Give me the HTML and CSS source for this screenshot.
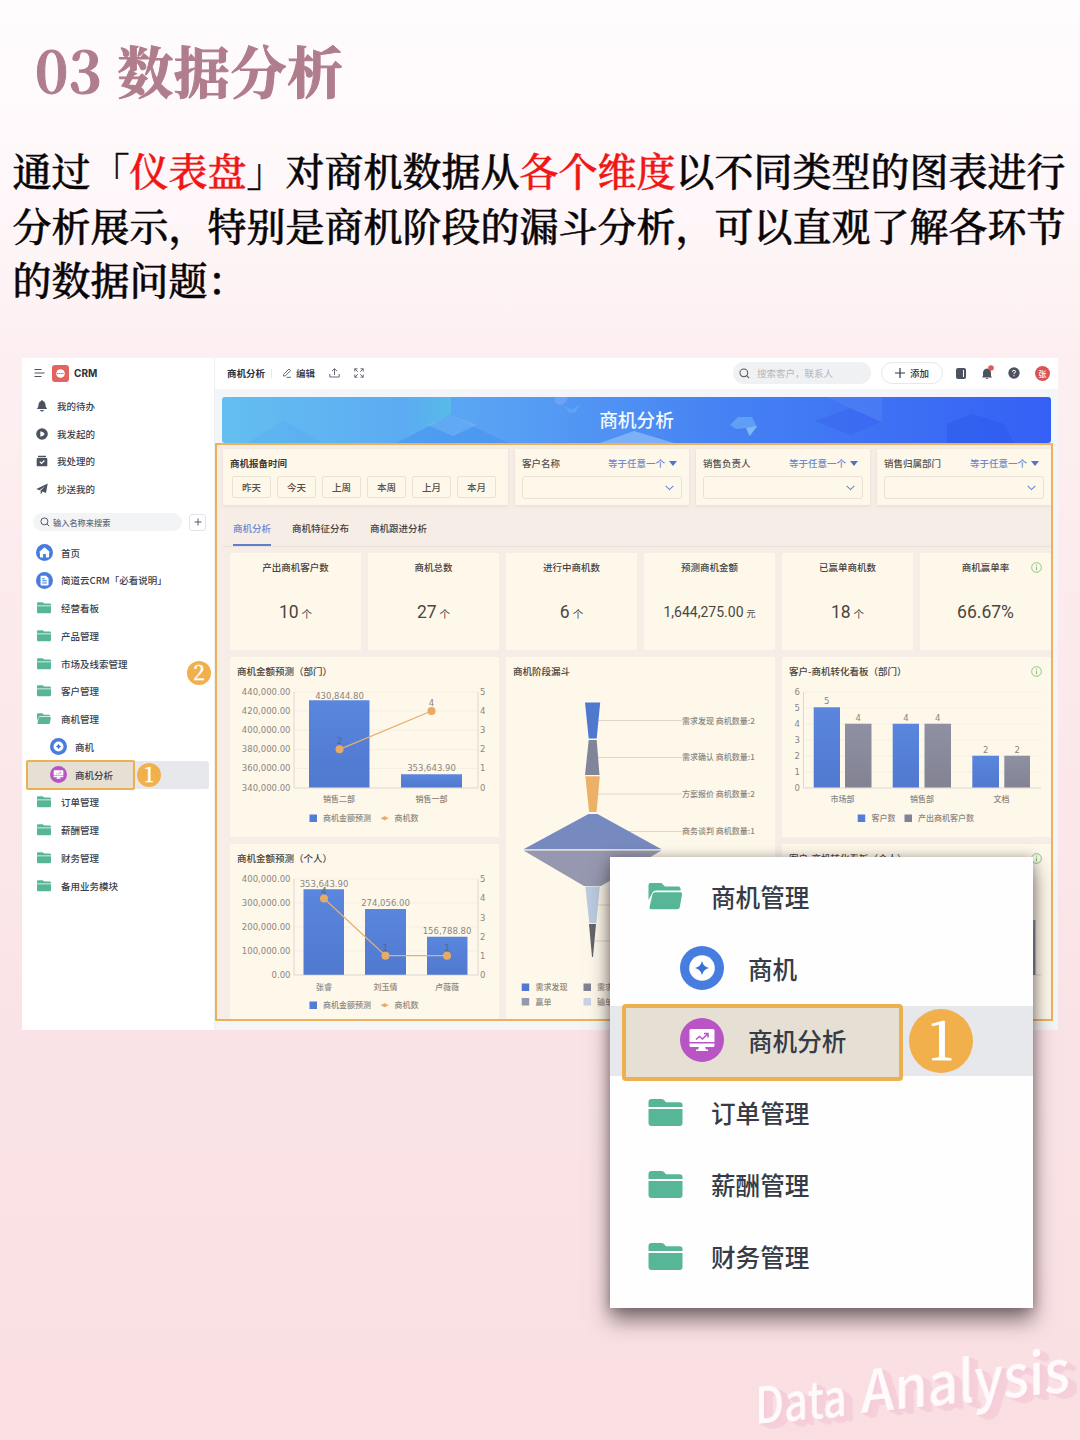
FILE: index.html
```html
<!DOCTYPE html>
<html lang="zh-CN">
<head>
<meta charset="utf-8">
<title>03 数据分析</title>
<link rel="stylesheet" href="styles.css">
</head>
<body>
<svg class="defs" width="0" height="0" aria-hidden="true">
  <defs>
    <symbol id="folder" viewBox="0 0 34 28"><path fill="#58b698" d="M0 8V3q0-3 3-3h10q1.500 0 2.500 1l2 2.200H31q3 0 3 3V8zM0 10h34v14q0 3-3 3H3q-3 0-3-3z"/></symbol>
    <symbol id="folder-open" viewBox="0 0 34 28"><path fill="#58b698" d="M0 17V2q0-2 2-2h11l3.500 3.500H30q2 0 2.300 4H8q-3.500 0-4.500 3zM6.500 9.300H32q2 0 1.600 2l-2.300 13q-.5 2-2.300 2H2.500q-2 0-1.500-2l3-13q.5-2 2.500-2z"/></symbol>
    <symbol id="compass" viewBox="0 0 44 44"><circle cx="22" cy="22" r="22" fill="#487de0"/><circle cx="22" cy="22" r="12.800" fill="#fff"/><path fill="#3c70d2" d="M22 15q1.300 5.700 7 7-5.700 1.300-7 7-1.300-5.700-7-7 5.700-1.300 7-7z"/></symbol>
    <symbol id="board" viewBox="0 0 44 44"><circle cx="22" cy="22" r="22" fill="#b954c4"/><path fill="#fff" d="M11 11h22q1.500 0 1.500 1.500V24h-25V12.500Q9.500 11 11 11zM9.500 25.500h25v2q0 1.500-1.500 1.500h-8l1 2.500h2V33H16v-1.500h2L19 29h-8q-1.500 0-1.500-1.500z"/><path d="M16 21.500l3.500-3 3 2.500 4.500-4.500M24 15.500h4v4" fill="none" stroke="#b954c4" stroke-width="1.500"/></symbol>
    <symbol id="home" viewBox="0 0 16 16"><circle cx="8" cy="8" r="8" fill="#487de0"/><path fill="#fff" d="M8 3l5 4.600-.7.700V12q0 .6-.6.600H9.300V9.500H6.700v3.100H4.300q-.6 0-.6-.6V8.300L3 7.600z"/></symbol>
    <symbol id="doc" viewBox="0 0 16 16"><circle cx="8" cy="8" r="8" fill="#487de0"/><path fill="#fff" d="M5 3.500h4.500l2.300 2.300v6.100q0 .7-.7.700H5q-.7 0-.7-.7V4.200q0-.7.700-.7z"/><path stroke="#487de0" d="M5.800 6.300h2.500M5.800 8.300h4.400M5.800 10.300h4.400"/></symbol>
    <symbol id="bell" viewBox="0 0 12 12"><path fill="#4d535e" d="M6 0q.8 0 .8.900Q9.500 1.800 9.500 5q0 2.500 1.700 4H.8Q2.500 7.500 2.500 5q0-3.200 2.700-4.100Q5.200 0 6 0zM4 10h4q-.5 1.600-2 1.600T4 10z"/></symbol>
    <symbol id="play" viewBox="0 0 12 12"><circle cx="6" cy="6" r="5.800" fill="#4d535e"/><path fill="#fff" d="M4.300 3.300Q7.800 4 8.700 6 7.800 8 4.300 8.700z"/></symbol>
    <symbol id="task" viewBox="0 0 12 12"><path fill="#4d535e" d="M2 .7h8v1.500H2zM1.500 3h9q.8 0 .8.800v6.700q0 .8-.8.800h-9q-.8 0-.8-.8V3.800q0-.8.800-.8z"/><path d="M3.800 6.700l1.700 1.700 2.900-2.900" fill="none" stroke="#fff" stroke-width="1.200"/></symbol>
    <symbol id="plane" viewBox="0 0 12 12"><path fill="#4d535e" d="M11.700.5L10 10 6.500 8.600 4.800 11.500 4.500 7.800 9 3.300 3.500 7.300.3 6z"/></symbol>
    <symbol id="glass" viewBox="0 0 10 10"><circle cx="4.400" cy="4.400" r="3.500" fill="none" stroke="#555b66"/><path d="M7 7l2.200 2.200" stroke="#555b66"/></symbol>
    <symbol id="chevron" viewBox="0 0 8 5"><path d="M.6.600L4 3.900 7.400.6" fill="none" stroke="#6985cf"/></symbol>
    <symbol id="info" viewBox="0 0 10 10"><circle cx="5" cy="5" r="4.400" fill="none" stroke="#7cbf73" stroke-width=".8"/><path d="M5 2.400v1M5 4.300v3.200" stroke="#7cbf73" stroke-width=".9"/></symbol>
    <linearGradient id="blue" x2="0" y2="1"><stop stop-color="#5a86dd"/><stop offset="1" stop-color="#5079cf"/></linearGradient>
    <linearGradient id="grey" x2="0" y2="1"><stop stop-color="#8f91a3"/><stop offset="1" stop-color="#828293"/></linearGradient>
  </defs>
</svg>

<main class="page">
  <h1 class="title">03 数据分析</h1>
  <p class="intro">通过「<em>仪表盘</em>」对商机数据从<em>各个维度</em>以不同类型的图表进行<br>分析展示，特别是商机阶段的漏斗分析，可以直观了解各环节<br>的数据问题：</p>

  <section class="app">
    <aside class="sidebar">
      <header class="brand">
        <svg width="11" height="10" viewBox="0 0 11 10"><path d="M.5 1.500h7M.5 5h10M.5 8.500h7" stroke="#4d535e" stroke-width="1.100"/></svg>
        <svg width="17" height="17" viewBox="0 0 17 17"><rect width="17" height="17" rx="3" fill="#e2645f"/><circle cx="8.500" cy="8.500" r="4.300" fill="#fff"/><path d="M5 8.500h7" stroke="#e2645f" stroke-width="1.200" stroke-dasharray="1.500 .6"/></svg>
        <b>CRM</b>
      </header>
      <ul class="mine">
        <li><svg><use href="#bell"/></svg>我的待办</li>
        <li><svg><use href="#play"/></svg>我发起的</li>
        <li><svg><use href="#task"/></svg>我处理的</li>
        <li><svg><use href="#plane"/></svg>抄送我的</li>
      </ul>
      <div class="finder">
        <label class="find"><svg width="10" height="10"><use href="#glass"/></svg>输入名称来搜索</label>
        <span class="plus"><svg width="8" height="8" viewBox="0 0 8 8"><path d="M4 .5v7M.5 4h7" stroke="#555b66"/></svg></span>
      </div>
      <ul class="nav">
        <li><svg class="round"><use href="#home"/></svg>首页</li>
        <li><svg class="round"><use href="#doc"/></svg>简道云CRM「必看说明」</li>
        <li><svg><use href="#folder"/></svg>经营看板</li>
        <li><svg><use href="#folder"/></svg>产品管理</li>
        <li><svg><use href="#folder"/></svg>市场及线索管理</li>
        <li><svg><use href="#folder"/></svg>客户管理</li>
        <li><svg><use href="#folder-open"/></svg>商机管理</li>
        <li class="sub"><svg class="round"><use href="#compass"/></svg>商机</li>
        <li class="sub active"><i class="frame"></i><svg class="round"><use href="#board"/></svg>商机分析<span class="badge one">1</span></li>
        <li><svg><use href="#folder"/></svg>订单管理</li>
        <li><svg><use href="#folder"/></svg>薪酬管理</li>
        <li><svg><use href="#folder"/></svg>财务管理</li>
        <li><svg><use href="#folder"/></svg>备用业务模块</li>
      </ul>
    </aside>

    <div class="main">
      <header class="topbar">
        <b>商机分析</b><i class="sep"></i>
        <span class="edit"><svg width="10" height="10" viewBox="0 0 10 10"><path d="M1.500 6.500l5.500-5.500 1.600 1.600L3.200 8H1.500zM4.500 9.300H9" fill="none" stroke="#555b66" stroke-width=".9"/></svg>编辑</span>
        <svg class="share" width="11" height="10" viewBox="0 0 11 10"><path d="M5.500 7V1M3 3l2.500-2.300L8 3M.8 6v3h9.400V6" fill="none" stroke="#555b66" stroke-width=".9"/></svg>
        <svg class="expand" width="10" height="10" viewBox="0 0 10 10"><path d="M.8 3.500V.8h2.700M.8.800L3.800 3.800M6.500.8h2.700v2.700M9.200.8L6.200 3.800M.8 6.500v2.700h2.700M.8 9.200l3-3M6.500 9.200h2.700V6.500M9.200 9.200l-3-3" fill="none" stroke="#555b66" stroke-width=".9"/></svg>
        <label class="search"><svg width="11" height="11"><use href="#glass"/></svg>搜索客户，联系人</label>
        <span class="add"><svg width="10" height="10" viewBox="0 0 10 10"><path d="M5 0v10M0 5h10" stroke="#333a45" stroke-width="1.200"/></svg>添加</span>
        <div class="tools">
          <svg width="10" height="11" viewBox="0 0 10 11"><rect width="10" height="11" rx="2" fill="#4d535e"/><path d="M7.500 2v7" stroke="#fff"/></svg>
          <svg width="12" height="16" viewBox="0 0 12 16"><path fill="#4d535e" d="M5 3.500Q9 4 9 8v3l1 1.500H0L1 11V8q0-4 4-4.500zM3.500 13h3L5 14.300z"/><circle cx="9" cy="3" r="2.800" fill="#df5a55"/></svg>
          <svg width="12" height="12" viewBox="0 0 12 12"><circle cx="6" cy="6" r="5.700" fill="#4d535e"/><path d="M4.400 4.800q0-1.500 1.600-1.500t1.600 1.400Q7.600 5.800 6 6.200v1M6 8.200v1.100" fill="none" stroke="#fff"/></svg>
          <span class="avatar">张</span>
        </div>
      </header>

      <div class="banner">
        <svg width="829" height="46" viewBox="0 0 829 46" preserveAspectRatio="none">
          <path d="M25 46L62 23l38 23z" fill="#4da2ef" opacity=".2"/>
          <path d="M182 0h47v17l-48 26z" fill="url(#teal)"/>
          <path d="M180 43l49-25 40 20 18 8H175z" fill="#3f8df0" opacity=".45"/>
          <path d="M205 28l24-10 26 10-24 11z" fill="#83bdf7" opacity=".4"/>
          <path d="M333 0h13q-2 8-8 8t-5-8z" fill="#91aef5" opacity=".45"/>
          <path d="M342 9l8 4 8-6-4 8-6 1z" fill="#6fc0f5" opacity=".35"/>
          <path d="M378 46l34-12 40 12z" fill="#9fc7f8" opacity=".6"/>
          <path d="M508 28l8-8h14l5 10-8 9-3-8-10 1z" fill="#75b9f5" opacity=".55"/>
          <path d="M524 31l11-2-7 10z" fill="#a5d2f8" opacity=".5"/>
          <path d="M593 24l36-13 30 14-30 13z" fill="#365eea" opacity=".4"/>
          <path d="M605 0h55v25l-30-13z" fill="#6190f5" opacity=".3"/>
          <path d="M725 46V27l25-10 32 10 10 19z" fill="#2956e8" opacity=".4"/>
          <defs><linearGradient id="teal"><stop stop-color="#55d0dc" stop-opacity="0"/><stop offset="1" stop-color="#55d0dc" stop-opacity=".5"/></linearGradient></defs>
        </svg>
        <strong>商机分析</strong>
      </div>

      <div class="board">
        <div class="filters">
          <div class="panel filter dates">
            <b>商机报备时间</b>
            <div class="chips"><span>昨天</span><span>今天</span><span>上周</span><span>本周</span><span>上月</span><span>本月</span></div>
          </div>
          <div class="panel filter"><div class="line"><span>客户名称</span><span class="op">等于任意一个<i></i></span></div><div class="select"><svg width="9" height="6"><use href="#chevron"/></svg></div></div>
          <div class="panel filter"><div class="line"><span>销售负责人</span><span class="op">等于任意一个<i></i></span></div><div class="select"><svg width="9" height="6"><use href="#chevron"/></svg></div></div>
          <div class="panel filter"><div class="line"><span>销售归属部门</span><span class="op">等于任意一个<i></i></span></div><div class="select"><svg width="9" height="6"><use href="#chevron"/></svg></div></div>
        </div>
        <nav class="tabs"><span class="on">商机分析</span><span>商机特征分布</span><span>商机跟进分析</span></nav>

        <div class="kpis">
          <div class="panel kpi"><h4>产出商机客户数</h4><p>10<small>个</small></p></div>
          <div class="panel kpi"><h4>商机总数</h4><p>27<small>个</small></p></div>
          <div class="panel kpi"><h4>进行中商机数</h4><p>6<small>个</small></p></div>
          <div class="panel kpi long"><h4>预测商机金额</h4><p>1,644,275.00<small>元</small></p></div>
          <div class="panel kpi"><h4>已赢单商机数</h4><p>18<small>个</small></p></div>
          <div class="panel kpi"><h4>商机赢单率</h4><p>66.67%</p><svg class="info"><use href="#info"/></svg></div>
        </div>

        <div class="charts">
          <div class="panel chart">
            <h3>商机金额预测（部门）</h3>
            <svg viewBox="230 685 269 152" width="269" height="152">
              <path class="gridline" d="M294 692h184M294 711h184M294 730h184M294 749.500h184M294 768.500h184"/>
              <path class="axis" d="M294 692v96h184v-96"/>
              <g class="num end"><text x="290.500" y="695">440,000.00</text><text x="290.500" y="714">420,000.00</text><text x="290.500" y="733.200">400,000.00</text><text x="290.500" y="752.300">380,000.00</text><text x="290.500" y="771.400">360,000.00</text><text x="290.500" y="790.500">340,000.00</text></g>
              <g class="num"><text x="480" y="695">5</text><text x="480" y="714">4</text><text x="480" y="733.200">3</text><text x="480" y="752.300">2</text><text x="480" y="771.400">1</text><text x="480" y="790.500">0</text></g>
              <path fill="url(#blue)" d="M309 700.300h60.500V787.500H309z"/><path fill="url(#blue)" d="M401 774.300h61V787.500h-61z"/>
              <g class="num mid"><text x="339.500" y="699">430,844.80</text><text x="431.500" y="771.300">353,643.90</text><text x="431.500" y="705.500">4</text></g>
              <text class="num mid dark" x="339.500" y="744">2</text>
              <path class="trend" d="M339.500 749.300L431.500 711"/><circle cx="339.500" cy="749.300" r="4" class="dot"/><circle cx="431.500" cy="711" r="4" class="dot"/>
              <g class="lab mid"><text x="339" y="802">销售二部</text><text x="431.500" y="802">销售一部</text></g>
              <path fill="#527dd6" d="M309.500 814.500h7.500v7.500h-7.500z"/><path class="trend" d="M381 818.200h7.500"/><circle cx="384.700" cy="818.200" r="2" class="dot"/>
              <g class="lab"><text x="323" y="821.300">商机金额预测</text><text x="394.500" y="821.300">商机数</text></g>
            </svg>
          </div>

          <div class="panel chart funnel">
            <h3>商机阶段漏斗</h3>
            <svg viewBox="506 685 269 336" width="269" height="336">
              <path class="lead" d="M597 720.500h85M598 757.500h84M598 794h84M628 831.500h54M598 905h90M595 941h90"/>
              <path fill="#4f78cf" d="M585 702.500h15.200l-3.500 36h-8z"/>
              <path fill="#818599" d="M588.700 740h8l2.800 35h-14.500z"/>
              <path fill="#edb069" d="M585.300 776.300h14.500l-3.200 35.700h-7.500z"/>
              <path fill="#778abf" d="M588.500 814h9l64 35.200H523.500z"/>
              <path fill="#9598af" d="M523.500 850.500h138l-60.500 35.500h-17z"/>
              <path fill="#bccbe0" d="M585.300 886.500h14.500l-3.500 36.500h-7z"/>
              <path fill="#62646d" d="M589 924h7l-3 33h-1z"/>
              <g class="lab"><text x="682" y="723.500">需求发现 商机数量:2</text><text x="682" y="760">需求确认 商机数量:1</text><text x="682" y="797">方案报价 商机数量:2</text><text x="682" y="834">商务谈判 商机数量:1</text></g>
              <path fill="#5079d1" d="M521.700 983.500h7.500v7.500h-7.500z"/><path fill="#818296" d="M583.500 983.500h7.500v7.500h-7.500z"/><path fill="#9598af" d="M521.700 998h7.500v7.500h-7.500z"/><path fill="#ccd2e6" d="M583.500 998h7.500v7.500h-7.500z"/>
              <g class="lab"><text x="535.500" y="990.300">需求发现</text><text x="597" y="990.300">需求确认</text><text x="535.500" y="1004.800">赢单</text><text x="597" y="1004.800">输单</text></g>
            </svg>
          </div>

          <div class="panel chart">
            <h3>客户-商机转化看板（部门）</h3><svg class="info"><use href="#info"/></svg>
            <svg viewBox="782 685 269 152" width="269" height="152">
              <path class="gridline" d="M803.500 692h238M803.500 708h238M803.500 724h238M803.500 740h238M803.500 756h238M803.500 772h238"/>
              <path class="axis" d="M803.500 692v96H1041"/>
              <g class="num end"><text x="800" y="695">6</text><text x="800" y="711">5</text><text x="800" y="727">4</text><text x="800" y="743">3</text><text x="800" y="759">2</text><text x="800" y="775">1</text><text x="800" y="790.500">0</text></g>
              <path fill="url(#blue)" d="M813.700 707.300H840V787.500h-26.300z"/><path fill="url(#grey)" d="M845 723.700h26.500V787.500H845z"/>
              <path fill="url(#blue)" d="M892.700 723.700H919V787.500h-26.300z"/><path fill="url(#grey)" d="M924.500 723.700H951V787.500h-26.500z"/>
              <path fill="url(#blue)" d="M972.300 755.700H999V787.500h-26.700z"/><path fill="url(#grey)" d="M1004.300 755.700H1030V787.500h-25.700z"/>
              <g class="num mid"><text x="826.800" y="704">5</text><text x="858.300" y="720.500">4</text><text x="906" y="720.500">4</text><text x="937.800" y="720.500">4</text><text x="985.700" y="752.500">2</text><text x="1017.300" y="752.500">2</text></g>
              <g class="lab mid"><text x="842.500" y="802">市场部</text><text x="922" y="802">销售部</text><text x="1001.500" y="802">文档</text></g>
              <path fill="#527dd6" d="M857.700 814.500h7.500v7.500h-7.500z"/><path fill="#818296" d="M904.500 814.500h7.500v7.500h-7.500z"/>
              <g class="lab"><text x="871.500" y="821.300">客户数</text><text x="918" y="821.300">产出商机客户数</text></g>
            </svg>
          </div>

          <div class="panel chart">
            <h3>商机金额预测（个人）</h3>
            <svg viewBox="230 872 269 149" width="269" height="149">
              <path class="gridline" d="M294 879h184M294 903h184M294 927h184M294 951h184"/>
              <path class="axis" d="M294 879v96h184v-96"/>
              <g class="num end"><text x="290.500" y="882">400,000.00</text><text x="290.500" y="906">300,000.00</text><text x="290.500" y="930">200,000.00</text><text x="290.500" y="954">100,000.00</text><text x="290.500" y="978">0.00</text></g>
              <g class="num"><text x="480" y="882">5</text><text x="480" y="901">4</text><text x="480" y="920.500">3</text><text x="480" y="939.500">2</text><text x="480" y="958.500">1</text><text x="480" y="978">0</text></g>
              <path fill="url(#blue)" d="M303.500 889.300H344V974.700h-40.500z"/><path fill="url(#blue)" d="M365 909h41V974.700h-41z"/><path fill="url(#blue)" d="M427 936.700h40.500V974.700H427z"/>
              <g class="num mid"><text x="324" y="886.700">353,643.90</text><text x="385.500" y="906">274,056.00</text><text x="447" y="934">156,788.80</text></g>
              <g class="num mid dark"><text x="324" y="894">4</text><text x="385.500" y="951">1</text><text x="447" y="951">1</text></g>
              <path class="trend" d="M324 898.500L385.500 955.700H447"/><circle cx="324" cy="898.500" r="4" class="dot"/><circle cx="385.500" cy="955.700" r="4" class="dot"/><circle cx="447" cy="955.700" r="4" class="dot"/>
              <g class="lab mid"><text x="324" y="989.500">张睿</text><text x="385.500" y="989.500">刘玉倩</text><text x="447" y="989.500">卢薇薇</text></g>
              <path fill="#527dd6" d="M309.500 1001.500h7.500v7.500h-7.500z"/><path class="trend" d="M381 1005.200h7.500"/><circle cx="384.700" cy="1005.200" r="2" class="dot"/>
              <g class="lab"><text x="323" y="1008.300">商机金额预测</text><text x="394.500" y="1008.300">商机数</text></g>
            </svg>
          </div>

          <div class="panel chart">
            <h3>客户-商机转化看板（个人）</h3><svg class="info"><use href="#info"/></svg>
            <svg viewBox="782 872 269 149" width="269" height="149">
              <path class="axis" d="M803.500 879v96H1041"/><path fill="url(#grey)" d="M1010 920h25.500v55H1010z"/>
            </svg>
          </div>
        </div>
        <i class="outline"></i>
        <span class="badge two">2</span>
      </div>
    </div>
  </section>

  <section class="popup">
    <ul>
      <li><svg class="folder"><use href="#folder-open"/></svg>商机管理</li>
      <li class="sub"><svg><use href="#compass"/></svg>商机</li>
      <li class="sub active"><i class="frame"></i><svg><use href="#board"/></svg>商机分析<span class="badge">1</span></li>
      <li><svg class="folder"><use href="#folder"/></svg>订单管理</li>
      <li><svg class="folder"><use href="#folder"/></svg>薪酬管理</li>
      <li><svg class="folder"><use href="#folder"/></svg>财务管理</li>
    </ul>
  </section>

  <svg class="wordmark" width="340" height="110" viewBox="740 1330 340 110">
    <text transform="matrix(1 -.09 0 1 755 1424)" font-size="50" textLength="92" lengthAdjust="spacingAndGlyphs">Data</text>
    <text transform="matrix(1 -.103 0 1 861 1413)" font-size="58" textLength="209" lengthAdjust="spacingAndGlyphs">Analysis</text>
  </svg>
</main>
</body>
</html>
```
FILE: styles.css
```css
* { box-sizing: border-box; }
body { margin: 0; font-family: "Noto Sans CJK SC", sans-serif; color: #3a404b; }
ul { list-style: none; margin: 0; padding: 0; }
h1, h3, h4, p { margin: 0; }
svg { display: block; flex: none; }
.defs { position: absolute; }
.page { position: relative; width: 1080px; height: 1440px; overflow: hidden; background: linear-gradient(#fffcfd 0, #fef6f8 220px, #fdeff1 360px, #fae3e6 1030px, #f9dfe2 1440px); }

.title { height: 142px; padding: 29px 0 0 35px; font: 700 56px/80px "Noto Serif CJK SC", "Source Han Serif SC", "Liberation Serif", "Noto Sans CJK SC", serif; letter-spacing: .6px; -webkit-text-stroke: 1px #b07d8d; color: #b07d8d; white-space: nowrap; }
.intro { height: 216px; padding-left: 12.500px; font: 500 39px/54.500px "Noto Serif CJK SC", "Source Han Serif SC", "Noto Sans CJK SC", serif; -webkit-text-stroke: .5px; color: #090607; white-space: nowrap; text-spacing-trim: space-all; }
.intro em { font-style: normal; color: #f01616; }

.app { display: flex; width: 1036px; height: 672px; margin-left: 22px; background: #f3f5f8; font-size: 9.500px; line-height: 14px; font-weight: 500; white-space: nowrap; }
.sidebar { width: 193px; background: #fff; border-right: 1px solid #eef0f3; }
.brand { display: flex; align-items: center; height: 30px; padding-left: 12px; gap: 7px; color: #2b303a; }
.brand b { font: 700 10px "Inter", sans-serif; margin-left: -2px; }
.mine { padding-top: 4px; }
.mine li { display: flex; align-items: center; gap: 9px; height: 27.700px; padding-left: 14px; }
.mine svg { width: 12px; height: 12px; }
.finder { display: flex; align-items: center; gap: 7px; padding: 2px 0 0 11px; height: 37px; }
.find { display: flex; align-items: center; gap: 3px; width: 149px; height: 18px; padding-left: 7px; border-radius: 9px; background: #f3f4f6; font-size: 8.200px; color: #666c76; }
.plus { display: grid; place-items: center; width: 17px; height: 17px; border: 1px solid #e2e4e8; border-radius: 3px; }
.nav { margin-top: -1px; }
.nav li { position: relative; display: flex; align-items: center; height: 27.750px; padding-left: 15px; gap: 10px; }
.nav svg { width: 14px; height: 12px; }
.nav svg.round { width: 17px; height: 17px; margin: 0 -1.500px; }
.nav .sub { margin: 0 5px; padding-left: 24px; }
.nav .active { background: #e6e8eb; border-radius: 3px; }
.active { isolation: isolate; }
.frame { z-index: -1; }
.nav .active .frame { position: absolute; left: -1px; top: -1px; width: 109px; height: 30px; border: 2px solid #edb04f; border-radius: 2px; background: #e6e0d4; }
.badge { display: grid; justify-items: center; border-radius: 50%; background: #f2b04d; color: #fff; font-family: "Noto Serif CJK SC", "Liberation Serif", serif; font-weight: 500; -webkit-text-stroke: .4px; }
.badge.one { position: absolute; left: 110px; top: 2px; width: 24px; height: 24px; font-size: 20px; line-height: 22px; }
.badge.two { position: absolute; left: -28px; top: 218px; width: 24px; height: 24px; font-size: 20px; line-height: 22px; }

.main { flex: 1; min-width: 0; }
.topbar { display: flex; align-items: center; height: 31px; padding: 0 0 1px 12px; background: #fff; color: #2b303a; }
.sep { width: 1px; height: 9px; margin-left: 6px; background: #e4e6ea; }
.edit { display: flex; align-items: center; gap: 4px; margin-left: 10px; }
.share { margin-left: 14px; }
.expand { margin-left: 14px; }
.search { display: flex; align-items: center; gap: 7px; width: 138px; height: 22px; margin-left: auto; padding-left: 6px; border-radius: 11px; background: #f0f1f3; color: #b3b7be; font-weight: 400; }
.add { display: flex; align-items: center; justify-content: center; gap: 5px; width: 62px; height: 22px; margin-left: 10px; border: 1px solid #e6e8eb; border-radius: 11px; }
.tools { display: flex; align-items: center; width: 115px; padding-left: 13px; gap: 16px; }
.tools svg:nth-child(2) { margin-right: -2px; }
.avatar { width: 15px; height: 15px; border-radius: 50%; background: #dc5450; color: #fff; font-size: 8px; line-height: 15px; text-align: center; margin-left: -1px; }
.banner { display: grid; width: 829px; height: 46px; margin: 8px 0 0 7px; border-radius: 3px; overflow: hidden; background: linear-gradient(90deg, #64bff0, #58a0f4 34%, #4682f3 60%, #3560f5); }
.banner > * { grid-area: 1 / 1; }
.banner strong { place-self: center; margin-top: -3px; font-size: 18.700px; line-height: 28px; font-weight: 500; color: #f2f8ff; }

.board { position: relative; width: 838px; height: 578px; background: #f5ede6; color: #54504a; }
.outline { position: absolute; inset: 0; border: 2px solid #edb259; border-radius: 1px; }
.panel { background: #fef8eb; }
.filters { display: grid; grid-template-columns: 285px 174px 174px 174px; gap: 7px; padding: 6px 0 0 8px; }
.filter { height: 56px; padding: 7px 7px 0; box-shadow: 0 1px 3px rgba(170, 145, 110, .18); }
.filter b { display: block; color: #3e3a36; }
.chips { display: flex; gap: 6px; padding: 6px 0 0 2px; }
.chips span { width: 39px; height: 22px; border: 1px solid #ebe2d3; border-radius: 2px; line-height: 20px; text-align: center; }
.line { display: flex; justify-content: space-between; }
.op { display: flex; align-items: center; gap: 4px; margin-right: 5px; color: #6d89cf; }
.op i { border: 4px solid transparent; border-top: 5px solid #4f74c8; border-bottom: 0; }
.select { display: flex; align-items: center; justify-content: flex-end; height: 23px; margin-top: 6px; padding-right: 7px; border: 1px solid #ebe2d3; border-radius: 3px; }
.tabs { display: flex; gap: 21px; height: 42px; margin-left: 8px; padding: 16px 0 0 10px; border-bottom: 1px solid #eae1d9; color: #47423d; }
.tabs .on { height: 25px; border-bottom: 2px solid #5e7fc9; color: #6d89cf; }
.kpis { display: grid; grid-template-columns: repeat(6, 131px); gap: 7px; padding: 6px 0 7px 15px; }
.kpi { position: relative; height: 97px; padding-top: 7px; text-align: center; }
.kpi h4 { font-weight: 500; font-size: 9.500px; color: #47423d; }
.kpi p { display: flex; align-items: baseline; justify-content: center; gap: 3px; margin-top: 27px; font: 400 17.500px/22px Roboto, sans-serif; color: #4a4742; }
.kpi.long p { font-size: 14px; }
.kpi small { font: 400 10.500px/14px "Noto Sans CJK SC", sans-serif; }
.kpi.long small { font-size: 9px; }
.info { position: absolute; right: 9px; top: 9px; width: 11px; height: 11px; }
.charts { display: grid; grid-template-columns: repeat(3, 269px); grid-template-rows: 180px 177px; gap: 7px; padding-left: 15px; }
.chart { position: relative; overflow: hidden; }
.chart h3 { height: 28px; padding: 7px 0 0 7px; font-size: 9.500px; line-height: 14px; font-weight: 500; color: #47423d; }
.funnel { grid-row: span 2; }
.gridline { stroke: #f5eee2; fill: none; }
.axis { stroke: #ddd8ce; fill: none; }
.lead { stroke: #ddd6ca; fill: none; }
.num { font-family: "DejaVu Sans", sans-serif; font-size: 8.500px; fill: #8b867d; }
.lab { font-size: 8px; fill: #8b867d; }
.end { text-anchor: end; }
.mid { text-anchor: middle; }
.dark { fill: #4d6695; }
.trend { fill: none; stroke: #e5ae73; stroke-width: 1.300; }
.dot { fill: #e9aa62; }

.popup { position: absolute; left: 610px; top: 857px; width: 423px; height: 451px; padding-top: 4px; background: #fefefe; box-shadow: 0 12px 20px rgba(45, 35, 38, .6), 0 0 10px rgba(45, 35, 38, .3); font-size: 24.600px; line-height: 36px; font-weight: 500; color: #363b46; white-space: nowrap; }
.popup ul { margin-top: -1.500px; }
.popup li { position: relative; display: flex; align-items: center; height: 72px; padding-left: 38px; gap: 28px; }
.popup .sub { padding-left: 70px; gap: 24px; }
.popup svg { width: 44px; height: 44px; margin-top: 1px; }
.popup svg.folder { width: 35px; height: 28px; margin-top: 3px; }
.popup .active { background: linear-gradient(#fefefe 1.500px, #e7e8eb 1.500px); }
.popup .frame { position: absolute; left: 12px; top: 0; width: 281px; height: 77px; border: 4px solid #edb04f; border-radius: 4px; background: #e6e0d4; }
.popup .badge { position: absolute; left: 299px; top: 5px; width: 64px; height: 64px; font-size: 52px; line-height: 58px; -webkit-text-stroke: .8px; }

.wordmark { position: absolute; left: 740px; top: 1330px; overflow: visible; }
.wordmark text { font-weight: 500; fill: #fffafc; filter: drop-shadow(1.500px 1px 0 #f4cbd6) drop-shadow(3px 2px 0 #f5ced9) drop-shadow(5px 3px 0 #f5d0da); }
```
